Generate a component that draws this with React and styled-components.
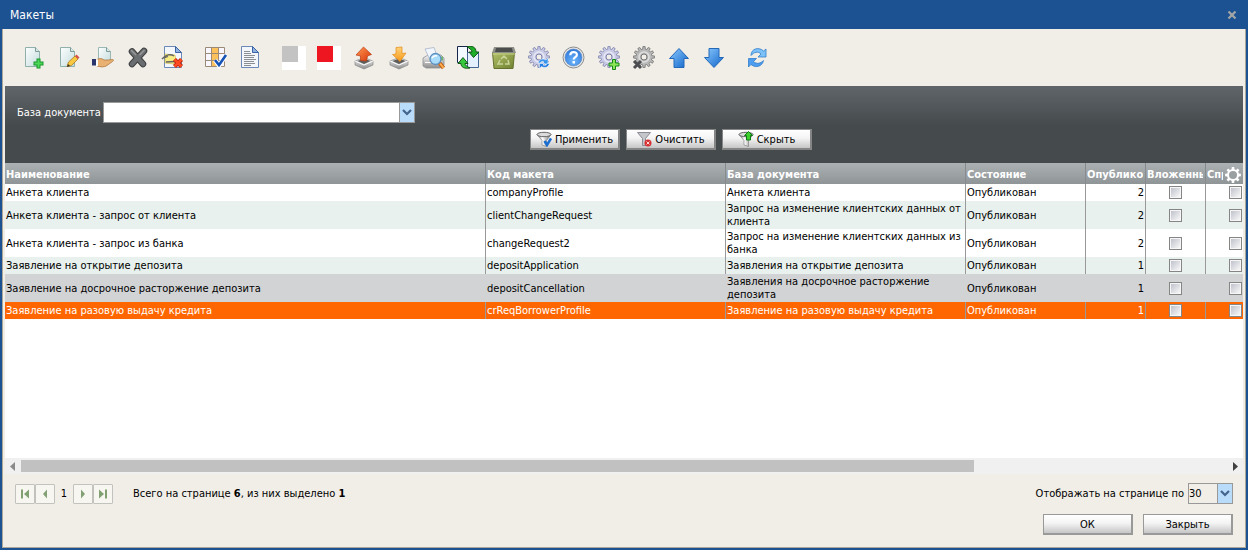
import React from "react";
import styled, { createGlobalStyle, css } from "styled-components";

const GlobalStyle = createGlobalStyle`
  * { box-sizing: border-box; }
  body {
    margin: 0;
    background: #1d5292;
    color: #000;
    font: 11px/13px "DejaVu Sans Condensed", Tahoma, "DejaVu Sans", sans-serif;
  }
  button, select, input { font: inherit; color: inherit; margin: 0; }
`;

const Dialog = styled.div`
  min-height: 100vh;
  display: flex;
  flex-direction: column;
  padding: 0 2px 2px;
  background: #1d5292;
`;

const TitleBar = styled.header`
  height: 29px;
  display: flex;
  align-items: center;
  justify-content: space-between;
  padding: 1px 8px 0 8px;
  color: #fff;
`;

const Title = styled.h1`
  margin: 0;
  font-size: 12px;
  line-height: 16px;
  font-weight: normal;
`;

const CloseButton = styled.button`
  display: grid;
  place-items: center;
  width: 12px;
  height: 16px;
  padding: 0;
  border: 0;
  background: none;
`;

const Body = styled.main`
  flex: 1;
  display: flex;
  flex-direction: column;
  padding: 0 2px;
  background: #f1eee7;
  border: 1px solid #aca899;
  border-top: 0;
`;

const Toolbar = styled.div`
  display: flex;
  gap: 11px;
  padding: 17px 16px 16px;
`;

const ToolButton = styled.button`
  width: 24px;
  height: 24px;
  padding: 0;
  border: 0;
  background: none;
  margin-left: ${(p) => (p.$group ? "8px" : "0")};
  svg { display: block; }
`;

const FilterPanel = styled.form`
  height: 77px;
  padding: 16px 12px 0;
  background: linear-gradient(#5f6568, #454a4d 40px);
`;

const FilterField = styled.label`
  display: flex;
  align-items: center;
  gap: 2px;
  color: #fff;
`;

const FilterActions = styled.div`
  display: flex;
  justify-content: center;
  gap: 6px;
  margin-top: 6px;
  padding-left: 94px;
`;

const SelectBox = styled.span`
  position: relative;
  display: block;
  width: ${(p) => p.$width};
  height: 21px;
  svg { position: absolute; right: 3px; top: 7px; pointer-events: none; }
`;

const Select = styled.select`
  appearance: none;
  width: 100%;
  height: 21px;
  padding: 0 16px 0 0;
  border: 1px solid #999;
  border-radius: 0;
  color: #000;
  background: ${(p) => (p.$plain ? "#f1eee7" : "#fff")}
    linear-gradient(90deg, #999 1px, #b9dcfb 1px) right / 15px 100% no-repeat;
`;

const PushButton = styled.button`
  width: 90px;
  height: 21px;
  display: flex;
  align-items: center;
  justify-content: center;
  gap: 3px;
  padding: 0;
  color: #000;
  border: solid ${(p) => (p.$dark ? "#858585" : "#999")};
  border-width: 1px 2px 2px 1px;
  background: linear-gradient(#fff, #f4f4f4 45%, #c6c6c6);
`;

const GridPane = styled.section`
  position: relative;
  flex: 1;
  overflow: hidden;
  background: #fff;
`;

const Table = styled.table`
  width: 1260px;
  table-layout: fixed;
  border-collapse: separate;
  border-spacing: 0;
`;

const HeadCell = styled.th`
  height: 21px;
  padding: 1px 2px 0 1px;
  overflow: hidden;
  white-space: nowrap;
  text-align: left;
  color: #fff;
  background: linear-gradient(#acb1b4, #8f9497);
  border-left: 1px solid #878b8d;
  &:first-child { border-left: 0; }
`;

const HeadText = styled.span`
  display: block;
  overflow: hidden;
`;

const rowTone = {
  plain: css`background: #fff;`,
  tint: css`background: #e8f1ed;`,
  hover: css`background: #d2d3d5; td { border-color: transparent; }`,
  selected: css`background: #ff6600; color: #fff;`,
};

const Row = styled.tr`
  ${(p) => rowTone[p.$tone]}
`;

const Cell = styled.td`
  height: 17px;
  padding: 1px;
  text-align: ${(p) => p.$align || "left"};
  border-left: 1px solid #999;
  &:first-child { border-left: 0; }
`;

const Check = styled.input.attrs({ type: "checkbox" })`
  appearance: none;
  display: block;
  width: 13px;
  height: 13px;
  margin: 0 auto;
  padding: 1px;
  border: 1px solid #858585;
  background: linear-gradient(135deg, #c0c2cc, #f8f8f8) content-box, #f6f6f6;
`;

const ColumnsButton = styled.button`
  position: absolute;
  top: 0;
  right: 0;
  width: 20px;
  height: 21px;
  padding: 0;
  border: 0;
  background: linear-gradient(#acb1b4, #8f9497);
  svg { display: block; }
`;

const ScrollBar = styled.div`
  display: flex;
  align-items: center;
  height: 16px;
  padding: 0 5px;
  gap: 6px;
  background: #f0f0f0;
`;

const ScrollTrack = styled.div`
  flex: 1;
  height: 12px;
`;

const ScrollThumb = styled.div`
  width: 79%;
  height: 12px;
  background: #c1c1c1;
`;

const Footer = styled.footer`
  padding: 9px 10px 12px;
`;

const FooterRow = styled.div`
  display: flex;
  align-items: center;
  justify-content: ${(p) => (p.$end ? "flex-end" : "flex-start")};
  gap: ${(p) => (p.$end ? "10px" : "0")};
  & + & { margin-top: 10px; }
`;

const PageButton = styled.button`
  display: grid;
  place-items: center;
  width: 20px;
  height: 20px;
  padding: 0;
  border: 1px solid #c3c3be;
  border-radius: 1px;
  background: #f7f6f1;
`;

const PageNumber = styled.span`
  width: 18px;
  text-align: center;
`;

const Summary = styled.span`
  flex: 1;
  padding-left: 20px;
`;

const PageSize = styled.label`
  display: flex;
  align-items: center;
  gap: 4px;
`;

/* ---------- drawings ---------- */

function gearPath(cx, cy, outer, inner, teeth) {
  const pts = [];
  const step = (Math.PI * 2) / teeth;
  for (let i = 0; i < teeth; i++) {
    const a = i * step - Math.PI / 2;
    [[-0.3, inner], [-0.2, outer], [0.2, outer], [0.3, inner]].forEach(([k, r]) => {
      pts.push(`${(cx + Math.cos(a + k * step) * r).toFixed(2)} ${(cy + Math.sin(a + k * step) * r).toFixed(2)}`);
    });
  }
  return `M${pts.join("L")}Z`;
}

const Svg = ({ size = 24, children }) => (
  <svg width={size} height={size} viewBox={`0 0 ${size} ${size}`} aria-hidden="true">{children}</svg>
);

const HiddenDefs = styled.svg`
  position: absolute;
`;

const Gradients = () => (
  <HiddenDefs width="0" height="0" aria-hidden="true">
    <defs>
      <linearGradient id="paper" x1="0" y1="0" x2="1" y2="1"><stop offset="0" stopColor="#fdfefe" /><stop offset="1" stopColor="#c5dcdd" /></linearGradient>
      <linearGradient id="blue" x1="0" y1="0" x2="1" y2="1"><stop offset="0" stopColor="#8ccbff" /><stop offset="1" stopColor="#0f62c8" /></linearGradient>
      <linearGradient id="tray" x1="0" y1="0" x2="0" y2="1"><stop offset="0" stopColor="#f7f7f7" /><stop offset="1" stopColor="#8d8d8d" /></linearGradient>
      <linearGradient id="up" x1="0" y1="0" x2="1" y2="1"><stop offset="0" stopColor="#ff9a55" /><stop offset="1" stopColor="#d83408" /></linearGradient>
      <linearGradient id="down" x1="0" y1="0" x2="0" y2="1"><stop offset="0" stopColor="#ffd27a" /><stop offset="1" stopColor="#f79a18" /></linearGradient>
      <linearGradient id="bin" x1="0" y1="0" x2="1" y2="1"><stop offset="0" stopColor="#b3c26a" /><stop offset="1" stopColor="#6f8130" /></linearGradient>
      <linearGradient id="funnel" x1="0" y1="0" x2="1" y2="0"><stop offset="0" stopColor="#777" /><stop offset="0.4" stopColor="#fff" /><stop offset="1" stopColor="#666" /></linearGradient>
      <radialGradient id="orb" cx="0.5" cy="0.7" r="0.7"><stop offset="0" stopColor="#6db6fb" /><stop offset="1" stopColor="#2f78dc" /></radialGradient>
    </defs>
  </HiddenDefs>
);

const GreenPage = () => (
  <>
    <path d="M4.500 1.500H14.500L18.500 5.500V20.500H4.500Z" fill="url(#paper)" stroke="#8fb0ab" />
    <path d="M14.500 1.500V5.500H18.500" fill="#dce9e6" stroke="#7c9a97" />
  </>
);

const BluePage = () => (
  <>
    <path d="M3.500 0.500H14.500L20.500 6.500V21.500H3.500Z" fill="#f3f7fc" stroke="#6b88b8" />
    <path d="M14.500 0.500V6.500H20.500Z" fill="#8fb2df" stroke="#3c64a4" />
  </>
);

const Tray = () => (
  <>
    <path d="M3 15L12 11.500L21 15V19L12 23L3 19Z" fill="url(#tray)" stroke="#8a8a8a" strokeWidth=".7" />
    <path d="M5.500 15L12 12.500L18.500 15L12 18Z" fill="#5d5d5d" />
    <path d="M3 15L12 19L21 15" fill="none" stroke="#fff" />
  </>
);

const Gear = ({ fill, stroke, cx = 12, cy = 11 }) => (
  <>
    <path d={gearPath(cx, cy, 10.500, 8, 12)} fill={fill} stroke={stroke} strokeWidth=".8" />
    <circle cx={cx} cy={cy} r="5" fill="none" stroke="#fff" strokeOpacity=".55" strokeWidth="1.500" />
    <circle cx={cx} cy={cy} r="3" fill="#f1eee7" stroke={stroke} />
  </>
);

const icons = {
  create: (
    <Svg>
      <GreenPage />
      <path d="M15.500 12.500h4v3h3v4h-3v3h-4v-3h-3v-4h3z" fill="#16982a" />
      <path d="M16.500 13.500h2V16.500h3v2h-3V21.500h-2v-3h-3v-2h3z" fill="#4fd858" />
    </Svg>
  ),
  edit: (
    <Svg>
      <GreenPage />
      <path d="M11 20.500l1.500-4.500L19 10l3 3-6.500 6.500z" fill="#f8c843" stroke="#a97a20" strokeWidth=".8" />
      <path d="M19 10l1.500-1.500 3 3L22 13z" fill="#d8504b" />
      <path d="M11 21l1-3 2 2z" fill="#3b3022" />
    </Svg>
  ),
  assign: (
    <Svg>
      <path d="M7.500 1.500H15.500L19.500 5.500V16.500H7.500Z" fill="url(#paper)" stroke="#9bb8b5" />
      <path d="M15.500 1.500V5.500H19.500" fill="#dce9e6" stroke="#7c9a97" />
      <path d="M6 13.500c3-1.500 5-1 7 .5h4l4.500-.5c1.500 0 1 1.500 0 2L16 19.500c-3 2-6 1.500-10 .5z" fill="#e9b273" stroke="#a86f35" strokeWidth=".7" />
      <path d="M1 13h4v6.500H1z" fill="#28366d" /><path d="M5 13.500h2V20H5z" fill="#fff" />
    </Svg>
  ),
  remove: (
    <Svg>
      <path d="M6 5.500L17 18M18 5L6 18" stroke="#3d3f40" strokeWidth="6.500" strokeLinecap="round" />
      <path d="M6 5.500L17 18M18 5L6 18" stroke="#6b6e70" strokeWidth="4.500" strokeLinecap="round" />
      <path d="M5.500 4.500l4 4M18 4.500l-4 4" stroke="#999" strokeWidth="1.500" strokeLinecap="round" />
    </Svg>
  ),
  unsign: (
    <Svg>
      <BluePage />
      <path d="M4 8l10 1 1 5-2 4-9-1z" fill="#f7ec84" stroke="#c9b64c" strokeWidth=".6" />
      <path d="M1 13c4-5 9-5 12-3M5 16l9-.5M1 12.500l6-2" fill="none" stroke="#626262" strokeWidth="1.300" />
      <path d="M13.500 13.500l7 7M20.500 13.500l-7 7" stroke="#b11c06" strokeWidth="4.200" />
      <path d="M13.500 13.500l7 7M20.500 13.500l-7 7" stroke="#ff4a22" strokeWidth="2.600" />
    </Svg>
  ),
  columns: (
    <Svg>
      <path d="M1.500 1.500h19v19h-19z" fill="#f8f7ff" />
      <path d="M8 2h6v18H8z" fill="#fcc15b" />
      <path d="M1.500 1.500h19v19h-19zM7.500 1.500v19M14.500 1.500v19M1.500 7.500h19M1.500 14.500h19" fill="none" stroke="#9a8a76" />
      <path d="M11 14l4 5.500 7-10.500" fill="none" stroke="#fff" strokeWidth="4.500" />
      <path d="M11 14l4 5 7-10" fill="none" stroke="#1553b5" strokeWidth="2.600" />
    </Svg>
  ),
  document: (
    <Svg>
      <path d="M2.500 0.500H13.500L19.500 6.500V21.500H2.500Z" fill="#f3f7fc" stroke="#6b88b8" />
      <path d="M13.500 0.500V6.500H19.500Z" fill="#8fb2df" stroke="#3c64a4" />
      <path d="M5 5.500h6M5 7.500h7M5 9.500h11M5 11.500h10M5 13.500h12M5 15.500h10M5 17.500h11M5 19.500h7" stroke="#8b8f94" />
    </Svg>
  ),
  grey: (<Svg><path d="M0 0h24v24H0z" fill="#fff" /><path d="M0 0h16v16H0z" fill="#c3c3c3" /></Svg>),
  red: (<Svg><path d="M0 0h24v24H0z" fill="#fff" /><path d="M0 0h16v16H0z" fill="#ee1620" /></Svg>),
  upload: (<Svg><Tray /><path d="M11.500 1l8 7.500-4 1.500L14.500 15 8.500 14.500V10L4 9z" fill="url(#up)" stroke="#b93c12" strokeWidth=".7" /></Svg>),
  download: (<Svg><Tray /><path d="M9 1.500l6-.5v6.500l4-.5-6 8.500L5.500 8.500 9 8z" fill="url(#down)" stroke="#e28a18" strokeWidth=".7" /></Svg>),
  preview: (
    <Svg>
      <path d="M1 12l5-3h13l3 3v7l-4 3H4l-3-2z" fill="url(#tray)" stroke="#8e9196" strokeWidth=".8" />
      <path d="M3 3l9-1.500L16 12H7z" fill="#f1f6fd" stroke="#a8b4c6" strokeWidth=".8" />
      <path d="M3 16.500h9" stroke="#fff" /><path d="M20 10.500v4" stroke="#75b76b" strokeWidth="2" />
      <path d="M17.500 17l4 5" stroke="#c35f16" strokeWidth="4" /><path d="M18 17.500l3.500 4.500" stroke="#ffb052" strokeWidth="2" />
      <circle cx="13.500" cy="13" r="5.500" fill="#a9dbfa" stroke="#5b8dbd" strokeWidth="1.300" />
      <path d="M10 12q2-3 5-2" stroke="#fff" strokeWidth="1.500" fill="none" />
    </Svg>
  ),
  exchange: (
    <Svg>
      <path d="M0.500 0.500h10v16h-10z" fill="#f4f9ff" stroke="#172648" />
      <path d="M10.500 6.500h11v15h-11z" fill="#e4efff" stroke="#466493" />
      <path d="M10 .5c6-1 9 1 9 5.500h3l-5.500 5.500L12 6h3c0-2-2-3-5-5.500z" fill="#1fae2a" stroke="#0a4a10" strokeWidth=".9" />
      <path d="M13 22c-6 1-9-1-9-4.500H1l5-6 5 6H8c0 2 2 3 5 4.500z" fill="#37c83e" stroke="#0a4a10" strokeWidth=".9" />
    </Svg>
  ),
  bin: (
    <Svg>
      <path d="M0.500 6.500L22.500 6.500L21 22.500H2Z" fill="url(#bin)" stroke="#64722d" />
      <path d="M2 1h20l2 6H0z" fill="#8e8f88" /><path d="M4 2h16l1 4H3z" fill="#4c4e4d" />
      <path d="M0.500 8h23" stroke="#c7d28b" />
      <path d="M9 13l3-3 3 3M16 14l1 4h-4M8 14l-2 4h5" fill="none" stroke="#c9d598" strokeWidth="1.500" />
    </Svg>
  ),
  gearSync: (
    <Svg>
      <Gear fill="#c9cbe6" stroke="#7d81ac" />
      <path d="M11 17c1-4 5-5 8-3l2-2v6h-6l2-2c-2-1-3 0-4 1z" fill="#3795ee" stroke="#fff" strokeWidth=".5" />
      <path d="M22.500 17.500c-1 4-5 5-8 3l-2 2v-5h5l-1.500 1.500c2 1 3.500 0 4-1.500z" fill="#2380e2" stroke="#fff" strokeWidth=".5" />
    </Svg>
  ),
  help: (
    <Svg>
      <circle cx="11.500" cy="11.500" r="10.500" fill="#e9e9e9" stroke="#8c8c8c" />
      <circle cx="11.500" cy="11.500" r="8.500" fill="url(#orb)" stroke="#5783b9" strokeWidth=".6" />
      <path d="M8.300 9.300c0-4.300 6.600-4.100 6.600-.6 0 2.400-3.200 2.300-3.200 4.800" fill="none" stroke="#fff" strokeWidth="2.200" />
      <path d="M10.500 15h2.500V17.500h-2.500z" fill="#fff" />
    </Svg>
  ),
  gearAdd: (
    <Svg>
      <Gear fill="#c9cbe6" stroke="#7d81ac" />
      <path d="M15.500 13.500h3v3.500H22v3h-3.500v3.500h-3V20H12v-3h3.500z" fill="#8be657" stroke="#158718" />
    </Svg>
  ),
  gearRemove: (
    <Svg>
      <Gear fill="#b9b9b9" stroke="#747474" />
      <path d="M2 15l7 7M9 15l-7 7" stroke="#4b4d4e" strokeWidth="3" />
    </Svg>
  ),
  moveUp: (<Svg><path d="M12 2.500L21.500 12.500H17V21.500H7V12.500H2.500Z" fill="url(#blue)" stroke="#2468ba" /></Svg>),
  moveDown: (<Svg><path d="M12 21.500L21.500 11.500H17V2.500H7V11.500H2.500Z" fill="url(#blue)" stroke="#2468ba" /></Svg>),
  refresh: (
    <Svg>
      <path d="M6 9.500c0-7 8-9 12.500-4.500L21 3v8h-8l3-3c-3-3-7-2-10 1.500z" fill="#7cc0f8" stroke="#347fc9" strokeWidth=".8" />
      <path d="M18.500 14.500c-1 6-8 8-12.500 4L3.500 21V12.500H11.500L8.500 15.500c3 3 7 2 10-1z" fill="#4d9df0" stroke="#347fc9" strokeWidth=".8" />
    </Svg>
  ),
};

const Funnel = () => (
  <>
    <path d="M1 3.500L6 9.500V14L10.500 15.500V9.500L15 3.500Z" fill="url(#funnel)" stroke="#777" strokeWidth=".6" />
    <ellipse cx="8" cy="3.500" rx="7" ry="2.200" fill="#dcdcdc" stroke="#666" />
  </>
);

const filterIcons = {
  apply: <Svg size={16}><Funnel /><path d="M8.500 10l2.500 4 4-6.500" fill="none" stroke="#1a6dd0" strokeWidth="2.500" /></Svg>,
  clear: (
    <Svg size={16}>
      <path d="M1.500 1.500h13l-5 6v7h-3v-7z" fill="#c5c5cc" stroke="#8b8b93" />
      <circle cx="12" cy="12" r="3.500" fill="#d63030" /><path d="M10.500 10.500l3 3M13.500 10.500l-3 3" stroke="#ffd9d9" />
    </Svg>
  ),
  hide: <Svg size={16}><Funnel /><path d="M10.500 .5l4 4h-2V9h-4V4.500h-2z" fill="#3ed02f" stroke="#0d7a12" /></Svg>,
};

const Chevron = () => (
  <svg width="10" height="7" viewBox="0 0 10 7" aria-hidden="true">
    <path d="M1 1l4 4L9 1" fill="none" stroke="#42648c" strokeWidth="2.200" />
  </svg>
);

const Arrow = ({ dir, bar, color = "#81a173" }) => (
  <svg width="10" height="10" viewBox="0 0 10 10" aria-hidden="true">
    <g transform={dir === "right" ? "translate(10 0) scale(-1 1)" : undefined}>
      <path d={bar ? "M9 0.500V9.500L4 5Z" : "M7 0.500V9.500L3 5Z"} fill={color} />
      {bar && <path d="M1 0.500h2v9H1z" fill={color} />}
    </g>
  </svg>
);

const ScrollArrow = ({ d, color }) => (
  <svg width="5" height="9" viewBox="0 0 5 9" aria-hidden="true"><path d={d} fill={color} /></svg>
);

/* ---------- data ---------- */

const tools = [
  ["create", "Создать"], ["edit", "Изменить"], ["assign", "Передать"], ["remove", "Удалить"], ["unsign", "Снять подпись"],
  ["columns", "Колонки", true], ["document", "Документ"],
  ["grey", "Серый", true], ["red", "Красный"], ["upload", "Выгрузить"], ["download", "Загрузить"], ["preview", "Просмотр"],
  ["exchange", "Обмен"], ["bin", "Корзина"], ["gearSync", "Обновить настройки"], ["help", "Помощь"], ["gearAdd", "Добавить настройку"],
  ["gearRemove", "Удалить настройку"], ["moveUp", "Вверх"], ["moveDown", "Вниз"],
  ["refresh", "Обновить", true],
];

const columns = [
  ["Наименование", 480], ["Код макета", 240], ["База документа", 240], ["Состояние", 120],
  ["Опубликовано", 60], ["Вложенный", 60], ["Справочник", 60],
];

const rows = [
  ["Анкета клиента", "companyProfile", "Анкета клиента", 2, "plain"],
  ["Анкета клиента - запрос от клиента", "clientChangeRequest", "Запрос на изменение клиентских данных от клиента", 2, "tint"],
  ["Анкета клиента - запрос из банка", "changeRequest2", "Запрос на изменение клиентских данных из банка", 2, "plain"],
  ["Заявление на открытие депозита", "depositApplication", "Заявления на открытие депозита", 1, "tint"],
  ["Заявление на досрочное расторжение депозита", "depositCancellation", "Заявления на досрочное расторжение депозита", 1, "hover"],
  ["Заявление на разовую выдачу кредита", "crReqBorrowerProfile", "Заявление на разовую выдачу кредита", 1, "selected"],
];

export default function App() {
  return (
    <Dialog>
      <GlobalStyle />
      <Gradients />
      <TitleBar>
        <Title>Макеты</Title>
        <CloseButton type="button" aria-label="Закрыть окно">
          <svg width="10" height="8" viewBox="0 0 10 8"><path d="M1.500 .5l7 7M8.500 .5l-7 7" stroke="#a3a6a6" strokeWidth="2.200" /></svg>
        </CloseButton>
      </TitleBar>
      <Body>
        <Toolbar>
          {tools.map(([id, label, group]) => (
            <ToolButton key={id} type="button" aria-label={label} $group={group}>{icons[id]}</ToolButton>
          ))}
        </Toolbar>

        <FilterPanel onSubmit={(e) => e.preventDefault()}>
          <FilterField>
            База документа
            <SelectBox $width="312px">
              <Select defaultValue=""><option value="" /></Select>
              <Chevron />
            </SelectBox>
          </FilterField>
          <FilterActions>
            <PushButton type="submit" $dark>{filterIcons.apply}Применить</PushButton>
            <PushButton type="reset" $dark>{filterIcons.clear}Очистить</PushButton>
            <PushButton type="button" $dark>{filterIcons.hide}Скрыть</PushButton>
          </FilterActions>
        </FilterPanel>

        <GridPane>
          <Table>
            <colgroup>{columns.map(([name, width]) => <col key={name} width={width} />)}</colgroup>
            <thead>
              <tr>{columns.map(([name]) => <HeadCell key={name} scope="col"><HeadText>{name}</HeadText></HeadCell>)}</tr>
            </thead>
            <tbody>
              {rows.map(([name, code, base, count, tone]) => (
                <Row key={code} $tone={tone}>
                  <Cell>{name}</Cell>
                  <Cell>{code}</Cell>
                  <Cell>{base}</Cell>
                  <Cell>Опубликован</Cell>
                  <Cell $align="right">{count}</Cell>
                  <Cell><Check aria-label={`Вложенный: ${name}`} /></Cell>
                  <Cell><Check aria-label={`Справочник: ${name}`} /></Cell>
                </Row>
              ))}
            </tbody>
          </Table>
          <ColumnsButton type="button" aria-label="Настройка колонок">
            <Svg size={20}>
              <path d={gearPath(10, 11, 8, 6, 8)} fill="#fff" />
              <circle cx="10" cy="11" r="4" fill="#9a9fa2" />
            </Svg>
          </ColumnsButton>
        </GridPane>
        <ScrollBar>
          <ScrollArrow d="M5 0V9L0 4.500Z" color="#8b8b8b" />
          <ScrollTrack><ScrollThumb /></ScrollTrack>
          <ScrollArrow d="M0 0V9L5 4.500Z" color="#404040" />
        </ScrollBar>

        <Footer>
          <FooterRow>
            <PageButton type="button" aria-label="Первая страница"><Arrow dir="left" bar /></PageButton>
            <PageButton type="button" aria-label="Предыдущая страница"><Arrow dir="left" /></PageButton>
            <PageNumber>1</PageNumber>
            <PageButton type="button" aria-label="Следующая страница"><Arrow dir="right" /></PageButton>
            <PageButton type="button" aria-label="Последняя страница"><Arrow dir="right" bar /></PageButton>
            <Summary>Всего на странице <b>6</b>, из них выделено <b>1</b></Summary>
            <PageSize>
              Отображать на странице по
              <SelectBox $width="45px">
                <Select $plain defaultValue="30"><option>30</option></Select>
                <Chevron />
              </SelectBox>
            </PageSize>
          </FooterRow>
          <FooterRow $end>
            <PushButton type="button">ОК</PushButton>
            <PushButton type="button">Закрыть</PushButton>
          </FooterRow>
        </Footer>
      </Body>
    </Dialog>
  );
}
